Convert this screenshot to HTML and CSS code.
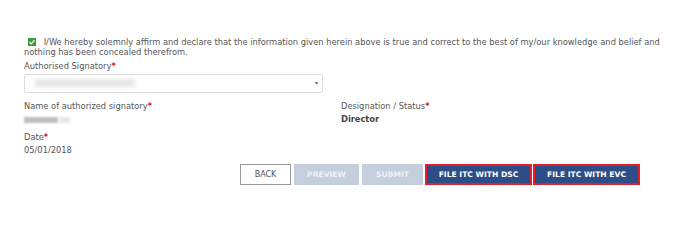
FILE: index.html
```html
<!DOCTYPE html>
<html lang="en">

<head>
    <meta charset="UTF-8">
    <title>Declaration</title>
    <link rel="stylesheet" href="styles.css">
</head>

<body>
    <div id="form">
        <p class="declare">
            <span class="tick">
                <svg width="8" height="8" viewBox="0 0 8 8"><path d="M1.6 4.2 L3.3 5.8 L6.4 2.2" fill="none" stroke="#fff" stroke-width="1.3"/></svg>
            </span>
            I/We hereby solemnly affirm and declare that the information given herein above is true and correct to the best of my/our knowledge and belief and nothing has been concealed therefrom.
        </p>

        <div class="label first">Authorised Signatory<span class="req">*</span></div>
        <div class="select">
            <span class="blur-a"></span>
            <span class="arrow">&#9662;</span>
        </div>

        <div class="row">
            <div class="col-name">
                <div class="label">Name of authorized signatory<span class="req">*</span></div>
                <div class="value"><span class="blur-b"></span><span class="blur-c"></span></div>
            </div>
            <div class="col-desig">
                <div class="label">Designation / Status<span class="req">*</span></div>
                <div class="value bold">Director</div>
            </div>
        </div>

        <div class="label date">Date<span class="req">*</span></div>
        <div class="value">05/01/2018</div>

        <div class="buttons">
            <button class="btn back">BACK</button>
            <button class="btn off preview">PREVIEW</button>
            <button class="btn off submit">SUBMIT</button>
            <button class="btn main">FILE ITC WITH DSC</button>
            <button class="btn main">FILE ITC WITH EVC</button>
        </div>
    </div>
</body>

</html>
```

FILE: styles.css
```css
body {
    margin: 0;
    font-family: 'DejaVu Sans', Verdana, sans-serif;
    font-size: 8.3px;
    color: #555;
    background: #fff;
}

#form {
    padding: 37px 20px 0 24px;
}

.declare {
    margin: 0;
    line-height: 10px;
}

.tick {
    display: inline-block;
    width: 8px;
    height: 8px;
    background: #3c9b3c;
    margin-left: 4px;
    margin-right: 5px;
    vertical-align: -1px;
}

.tick svg {
    display: block;
}

.label {
    margin-top: 5px;
    line-height: 11px;
}

.label.first {
    margin-top: 4px;
}

.label.date {
    margin-top: 7px;
}

.req {
    color: #e0101a;
    font-weight: bold;
}

.select {
    position: relative;
    width: 297px;
    height: 17px;
    margin-top: 2px;
    border: 1px solid #ddd;
    border-radius: 2px;
}

.blur-a {
    position: absolute;
    left: 10px;
    top: 4px;
    width: 100px;
    height: 8px;
    background: #e6e6e6;
    filter: blur(2px);
}

.arrow {
    position: absolute;
    right: 4px;
    top: 4px;
    font-size: 6px;
    color: #666;
}

.row {
    display: flex;
    margin-top: 3px;
}

.col-name {
    width: 317px;
}

.value {
    margin-top: 2px;
    line-height: 11px;
    height: 11px;
}

.bold {
    font-weight: bold;
    color: #444;
}

.blur-b {
    display: inline-block;
    width: 34px;
    height: 6px;
    margin-top: 3px;
    background: #bdbdbd;
    filter: blur(1.3px);
}

.blur-c {
    display: inline-block;
    width: 12px;
    height: 6px;
    margin-top: 2px;
    background: #e8e8e8;
    filter: blur(1px);
}

.buttons {
    display: flex;
    justify-content: flex-end;
    margin-top: 8px;
    margin-right: 25px;
}

.btn {
    font-family: 'DejaVu Sans', Verdana, sans-serif;
    font-size: 8px;
    height: 21px;
    padding: 0;
    border: none;
    cursor: pointer;
}

.back {
    width: 51px;
    background: #fff;
    border: 1px solid #999;
    color: #555;
    margin-right: 3px;
}

.off {
    background: #c5cedc;
    color: #eef1f6;
    font-weight: bold;
    font-size: 7.6px;
}

.preview {
    width: 65px;
    margin-right: 3px;
}

.submit {
    width: 61px;
    margin-right: 2px;
}

.main {
    width: 107px;
    background: #2c4d86;
    color: #fff;
    font-weight: bold;
    font-size: 7.6px;
    border: 2px solid #e41f2d;
    margin-right: 1px;
}

.main:last-child {
    margin-right: 0;
}
```
